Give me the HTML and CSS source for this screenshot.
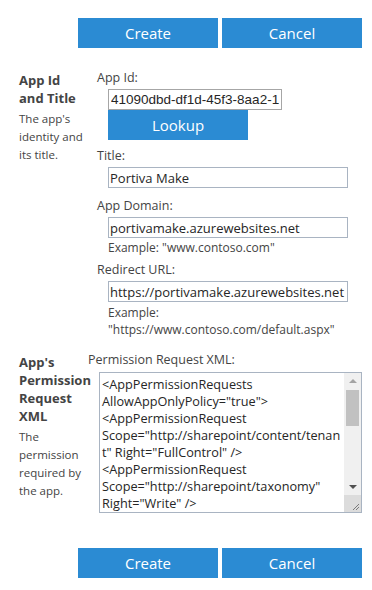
FILE: index.html
```html
<!DOCTYPE html>
<html>
<head>
<meta charset="utf-8">
<link rel="stylesheet" href="styles.css">
</head>
<body>
<div class="actions actions-top">
  <button class="btn">Create</button>
  <button class="btn">Cancel</button>
</div>

<div class="section section-id">
  <div class="side">
    <div class="side-title">App Id<br>and Title</div>
    <div class="side-desc">The app's<br>identity and<br>its title.</div>
  </div>
  <div class="fields">
    <div class="label">App Id:</div>
    <input class="field field-id" type="text" value="41090dbd-df1d-45f3-8aa2-11ab5c4d6e7f">
    <button class="btn btn-lookup">Lookup</button>

    <div class="label label-title">Title:</div>
    <input class="field" type="text" value="Portiva Make">

    <div class="label label-domain">App Domain:</div>
    <input class="field" type="text" value="portivamake.azurewebsites.net">
    <div class="hint">Example: "www.contoso.com"</div>

    <div class="label label-redirect">Redirect URL:</div>
    <input class="field" type="text" value="https://portivamake.azurewebsites.net">
    <div class="hint hint-two">Example:<br>"https://www.contoso.com/default.aspx"</div>
  </div>
</div>

<div class="section section-perm">
  <div class="side">
    <div class="side-title">App's<br>Permission<br>Request<br>XML</div>
    <div class="side-desc">The<br>permission<br>required by<br>the app.</div>
  </div>
  <div class="fields">
    <div class="label">Permission Request XML:</div>
    <div class="xml">
      <div class="xml-text">
        <div>&lt;AppPermissionRequests</div>
        <div>AllowAppOnlyPolicy="true"&gt;</div>
        <div>&lt;AppPermissionRequest</div>
        <div>Scope="http://sharepoint/content/tenan</div>
        <div>t" Right="FullControl" /&gt;</div>
        <div>&lt;AppPermissionRequest</div>
        <div>Scope="http://sharepoint/taxonomy"</div>
        <div>Right="Write" /&gt;</div>
      </div>
      <div class="scrollbar">
        <div class="sb-up"></div>
        <div class="sb-track"><div class="sb-thumb"></div></div>
        <div class="sb-down"></div>
        <div class="sb-corner">
          <svg width="17" height="17" viewBox="0 0 17 17"><path d="M15 9 L9 15 M15 12 L12 15" stroke="#7a7a7a" stroke-width="1" fill="none"/></svg>
        </div>
      </div>
    </div>
  </div>
</div>

<div class="actions actions-bottom">
  <button class="btn">Create</button>
  <button class="btn">Cancel</button>
</div>
</body>
</html>
```
FILE: styles.css
```css
body {
  margin: 0;
  background: #fff;
  font-family: "Open Sans", "Noto Sans", sans-serif;
  color: #444;
}

.actions {
  display: flex;
  gap: 4px;
  padding-left: 78px;
}
.actions-top { padding-top: 18px; }
.actions-bottom { margin-top: 35px; }

.btn {
  width: 140px;
  height: 30px;
  border: none;
  margin: 0;
  padding: 0;
  background: #2b8bd3;
  color: #fff;
  font-family: "Open Sans", "Noto Sans", sans-serif;
  font-size: 15px;
  line-height: 30px;
}

.section {
  display: flex;
  padding-left: 19px;
}
.section-id { margin-top: 21px; }
.section-perm { margin-top: 13px; }

.side {
  padding-top: 2px;
  flex: none;
}
.section-id .side { width: 78px; }
.section-perm .side { width: 69px; }

.side-title {
  font-weight: bold;
  font-size: 13px;
  line-height: 18px;
  color: #444;
}
.side-desc {
  margin-top: 3px;
  font-size: 11.5px;
  line-height: 18px;
  color: #444;
  white-space: nowrap;
}

.fields {
  display: flex;
  flex-direction: column;
  align-items: flex-start;
}

.label {
  font-size: 12.5px;
  line-height: 18px;
  color: #444;
}
.label-title { margin-top: 7px; }
.label-domain { margin-top: 9px; }
.label-redirect { margin-top: 4px; }

.field {
  box-sizing: border-box;
  margin: 2px 0 0 11px;
  width: 240px;
  height: 21px;
  padding: 0 1px;
  border: 1px solid #a9b4c2;
  font-family: "Open Sans", "Noto Sans", sans-serif;
  font-size: 13px;
  color: #262626;
  outline: none;
}
.field-id {
  width: 174px;
  border-color: #a6a6a6;
  font-family: "Liberation Sans", Arial, sans-serif;
  font-size: 13.5px;
  padding: 0 2px;
}

.btn-lookup {
  margin-left: 11px;
}

.hint {
  margin-left: 11px;
  margin-top: 1px;
  font-size: 12px;
  line-height: 18px;
  color: #444;
}
.hint-two { line-height: 17px; margin-top: 2px; }

.xml {
  box-sizing: border-box;
  margin: 3px 0 0 11px;
  width: 263px;
  height: 141px;
  border: 1px solid #a9b4c2;
  display: flex;
  overflow: hidden;
}
.xml-text {
  flex: 1;
  padding: 3px 0 0 2px;
  font-size: 12.7px;
  line-height: 17px;
  color: #262626;
  white-space: nowrap;
  overflow: hidden;
}

.scrollbar {
  flex: none;
  width: 17px;
  background: #f0f0f0;
  display: flex;
  flex-direction: column;
}
.sb-up, .sb-down {
  height: 17px;
  position: relative;
}
.sb-up::after, .sb-down::after {
  content: "";
  position: absolute;
  left: 5px;
  width: 0;
  height: 0;
  border-left: 4px solid transparent;
  border-right: 4px solid transparent;
}
.sb-up::after {
  top: 6px;
  border-bottom: 4px solid #a3a3a3;
}
.sb-down::after {
  top: 7px;
  border-top: 4px solid #505050;
}
.sb-track {
  flex: 1;
  padding: 0 2px;
}
.sb-thumb {
  height: 36px;
  background: #c1c1c1;
}
.sb-corner {
  height: 17px;
  background: #dcdcdc;
}
.sb-corner svg { display: block; }
```
